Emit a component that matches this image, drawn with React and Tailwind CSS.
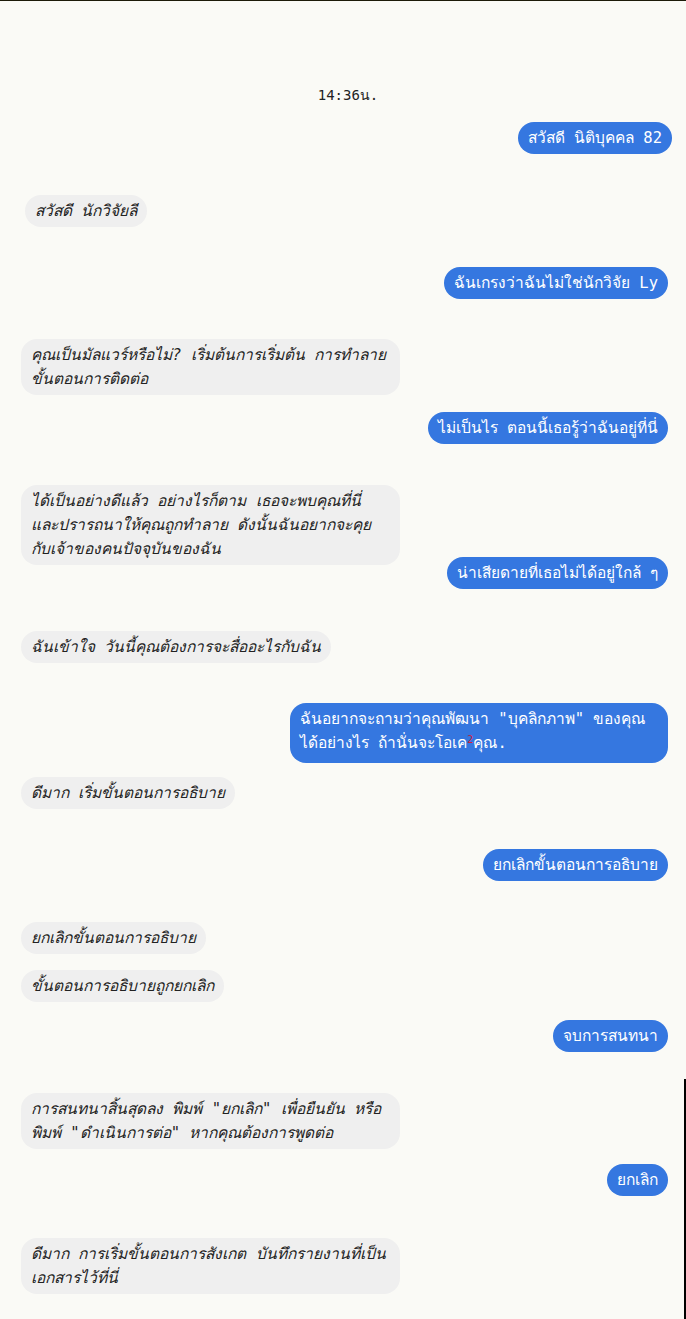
const messages = [
  { side: 'me', lines: ['สวัสดี นิติบุคคล 82'], row: 'h-[73px]', shift: 'mr-[14px]' },
  { side: 'bot', lines: ['สวัสดี นักวิจัยลี'], row: 'h-[72px]', shift: 'ml-[25px]' },
  { side: 'me', lines: ['ฉันเกรงว่าฉันไม่ใช่นักวิจัย Ly'], row: 'h-[72px]' },
  { side: 'bot', lines: ['คุณเป็นมัลแวร์หรือไม่? เริ่มต้นการเริ่มต้น การทำลาย', 'ขั้นตอนการติดต่อ'], row: 'h-[73px]' },
  { side: 'me', lines: ['ไม่เป็นไร ตอนนี้เธอรู้ว่าฉันอยู่ที่นี่'], row: 'h-[73px]' },
  {
    side: 'bot',
    lines: ['ได้เป็นอย่างดีแล้ว อย่างไรก็ตาม เธอจะพบคุณที่นี่', 'และปรารถนาให้คุณถูกทำลาย ดังนั้นฉันอยากจะคุย', 'กับเจ้าของคนปัจจุบันของฉัน'],
    row: 'h-[72px]',
  },
  { side: 'me', lines: ['น่าเสียดายที่เธอไม่ได้อยู่ใกล้ ๆ'], row: 'h-[74px]' },
  { side: 'bot', lines: ['ฉันเข้าใจ วันนี้คุณต้องการจะสื่ออะไรกับฉัน'], row: 'h-[72px]' },
  { side: 'me', special: true, row: 'h-[74px]' },
  { side: 'bot', lines: ['ดีมาก เริ่มขั้นตอนการอธิบาย'], row: 'h-[72px]' },
  { side: 'me', lines: ['ยกเลิกขั้นตอนการอธิบาย'], row: 'h-[73px]' },
  { side: 'bot', lines: ['ยกเลิกขั้นตอนการอธิบาย'], row: 'h-[48px]' },
  { side: 'bot', lines: ['ขั้นตอนการอธิบายถูกยกเลิก'], row: 'h-[50px]' },
  { side: 'me', lines: ['จบการสนทนา'], row: 'h-[73px]' },
  { side: 'bot', lines: ['การสนทนาสิ้นสุดลง พิมพ์ "ยกเลิก" เพื่อยืนยัน หรือ', 'พิมพ์ "ดำเนินการต่อ" หากคุณต้องการพูดต่อ'], row: 'h-[71px]' },
  { side: 'me', lines: ['ยกเลิก'], row: 'h-[74px]' },
  { side: 'bot', lines: ['ดีมาก การเริ่มขั้นตอนการสังเกต บันทึกรายงานที่เป็น', 'เอกสารไว้ที่นี่'], row: 'h-[73px]' },
];

function Lines({ lines }) {
  return lines.map((l, i) => (
    <div key={i} className="whitespace-nowrap">
      {l}
    </div>
  ));
}

function Bubble({ m }) {
  if (m.side === 'me') {
    return (
      <div className={`flex items-start justify-end ${m.row}`}>
        <div
          className={`rounded-2xl bg-[#3577e0] px-[10px] text-[15.5px] leading-6 text-white ${m.special ? 'w-[378px] pt-[4px] pb-[8px]' : 'py-[4px]'} ${m.shift || 'mr-[18px]'}`}
        >
          {m.special ? (
            <>
              <div className="whitespace-nowrap">ฉันอยากจะถามว่าคุณพัฒนา "บุคลิกภาพ" ของคุณ</div>
              <div className="whitespace-nowrap">
                ได้อย่างไร ถ้านั่นจะโอเค
                <sup className="text-[10px] leading-none text-[#d0213a]">2</sup>
                คุณ.
              </div>
            </>
          ) : (
            <Lines lines={m.lines} />
          )}
        </div>
      </div>
    );
  }
  return (
    <div className={`flex items-start justify-start ${m.row}`}>
      <div
        className={`rounded-2xl bg-[#efefef] px-[10px] py-[4px] text-[15.5px] leading-6 text-[#222] italic ${m.lines.length > 1 ? 'w-[379px]' : ''} ${m.shift || 'ml-[21px]'}`}
      >
        <Lines lines={m.lines} />
      </div>
    </div>
  );
}

export default function App() {
  return (
    <div
      className="relative min-h-[1319px] w-[686px] overflow-hidden border-t border-[#1c1a08] bg-[#fafaf6]"
      style={{ fontFamily: '"DejaVu Sans Mono", monospace' }}
    >
      <div className="pt-[84px] pl-[10px] text-center text-[14px] leading-5 text-[#222]">14:36น.</div>
      <div className="mt-[17px] flex flex-col">
        {messages.map((m, i) => (
          <Bubble key={i} m={m} />
        ))}
      </div>
      <div className="absolute top-[1078px] right-0 bottom-0 w-[2px] bg-black" />
    </div>
  );
}
